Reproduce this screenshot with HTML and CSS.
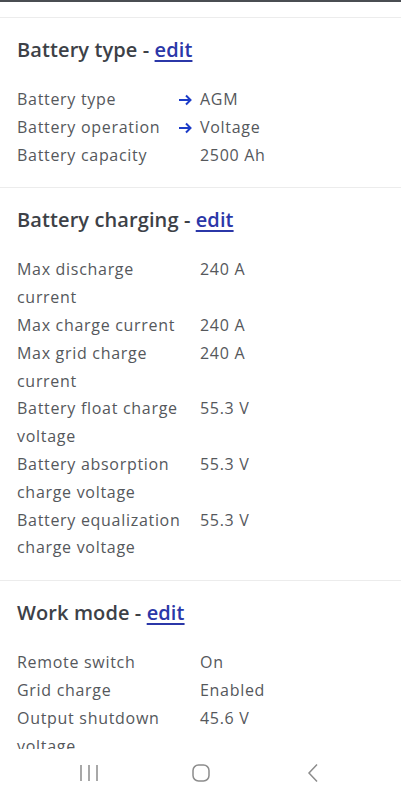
FILE: index.html
```html
<!DOCTYPE html>
<html>
<head>
<meta charset="utf-8">
<link rel="stylesheet" href="styles.css">
</head>
<body>
<div class="screen">
  <div class="content">
    <div class="topline"></div>
    <div class="spacer"></div>
    <section class="card">
      <h2 class="title">Battery type - <a class="edit" href="#">edit</a></h2>
      <div class="rows">
        <div class="label">Battery type</div><div class="value"><svg class="arrow" width="15" height="12" viewBox="0 0 15 12"><path d="M1 6h12M8 1.5l4.5 4.5L8 10.5" stroke="#1c3cc8" stroke-width="2" fill="none"/></svg>AGM</div>
        <div class="label">Battery operation</div><div class="value"><svg class="arrow" width="15" height="12" viewBox="0 0 15 12"><path d="M1 6h12M8 1.5l4.5 4.5L8 10.5" stroke="#1c3cc8" stroke-width="2" fill="none"/></svg>Voltage</div>
        <div class="label">Battery capacity</div><div class="value">2500 Ah</div>
      </div>
    </section>
    <section class="card">
      <h2 class="title">Battery charging - <a class="edit" href="#">edit</a></h2>
      <div class="rows">
        <div class="label">Max discharge current</div><div class="value">240 A</div>
        <div class="label">Max charge current</div><div class="value">240 A</div>
        <div class="label">Max grid charge current</div><div class="value">240 A</div>
        <div class="label">Battery float charge voltage</div><div class="value">55.3 V</div>
        <div class="label">Battery absorption charge voltage</div><div class="value">55.3 V</div>
        <div class="label">Battery equalization charge voltage</div><div class="value">55.3 V</div>
      </div>
    </section>
    <section class="card">
      <h2 class="title">Work mode - <a class="edit" href="#">edit</a></h2>
      <div class="rows">
        <div class="label">Remote switch</div><div class="value">On</div>
        <div class="label">Grid charge</div><div class="value">Enabled</div>
        <div class="label">Output shutdown voltage</div><div class="value">45.6 V</div>
      </div>
    </section>
  </div>
  <nav class="navbar">
    <svg class="nav-icon" width="20" height="20" viewBox="0 0 20 20"><path d="M2 2v16M10 2v16M18 2v16" stroke="#8c8c8c" stroke-width="1.5" fill="none"/></svg>
    <svg class="nav-icon" width="20" height="20" viewBox="0 0 20 20"><rect x="2" y="2" width="16" height="16" rx="5.5" stroke="#8c8c8c" stroke-width="1.5" fill="none"/></svg>
    <svg class="nav-icon" width="20" height="20" viewBox="0 0 20 20"><path d="M14 1.5L6 10l8 8.5" stroke="#8c8c8c" stroke-width="1.5" fill="none"/></svg>
  </nav>
</div>
</body>
</html>
```
FILE: styles.css
```css
html, body {
  margin: 0;
  padding: 0;
  background: #fff;
}
.screen {
  width: 401px;
  height: 800px;
  display: flex;
  flex-direction: column;
  overflow: hidden;
  font-family: "Open Sans", "Noto Sans", sans-serif;
}
.content {
  height: 749px;
  overflow: hidden;
  flex: none;
}
.topline {
  height: 2px;
  background: #4a4d52;
}
.spacer {
  height: 15px;
}
.card {
  border-top: 1px solid #ececec;
  padding: 18px 17px 18px 17px;
}
.title {
  margin: 0 0 22px 0;
  font-size: 20px;
  line-height: 28px;
  font-weight: 600;
  color: #3d4147;
  letter-spacing: 0.1px;
}
.edit {
  color: #2b37a8;
  text-decoration: underline;
  text-underline-offset: 3px;
  text-decoration-thickness: 1.5px;
}
.rows {
  display: grid;
  grid-template-columns: 172px 1fr;
  column-gap: 11px;
  font-size: 16px;
  line-height: 27.8px;
  color: #55585c;
  letter-spacing: 0.7px;
}
.value {
  white-space: nowrap;
}
.arrow {
  display: inline-block;
  vertical-align: -1px;
  margin-left: -22px;
  margin-right: 7px;
}
.navbar {
  height: 51px;
  flex: none;
  background: #fff;
  display: flex;
  justify-content: center;
  align-items: flex-start;
  gap: 92px;
  padding-top: 14px;
  box-sizing: border-box;
}
.nav-icon {
  display: block;
}
```
